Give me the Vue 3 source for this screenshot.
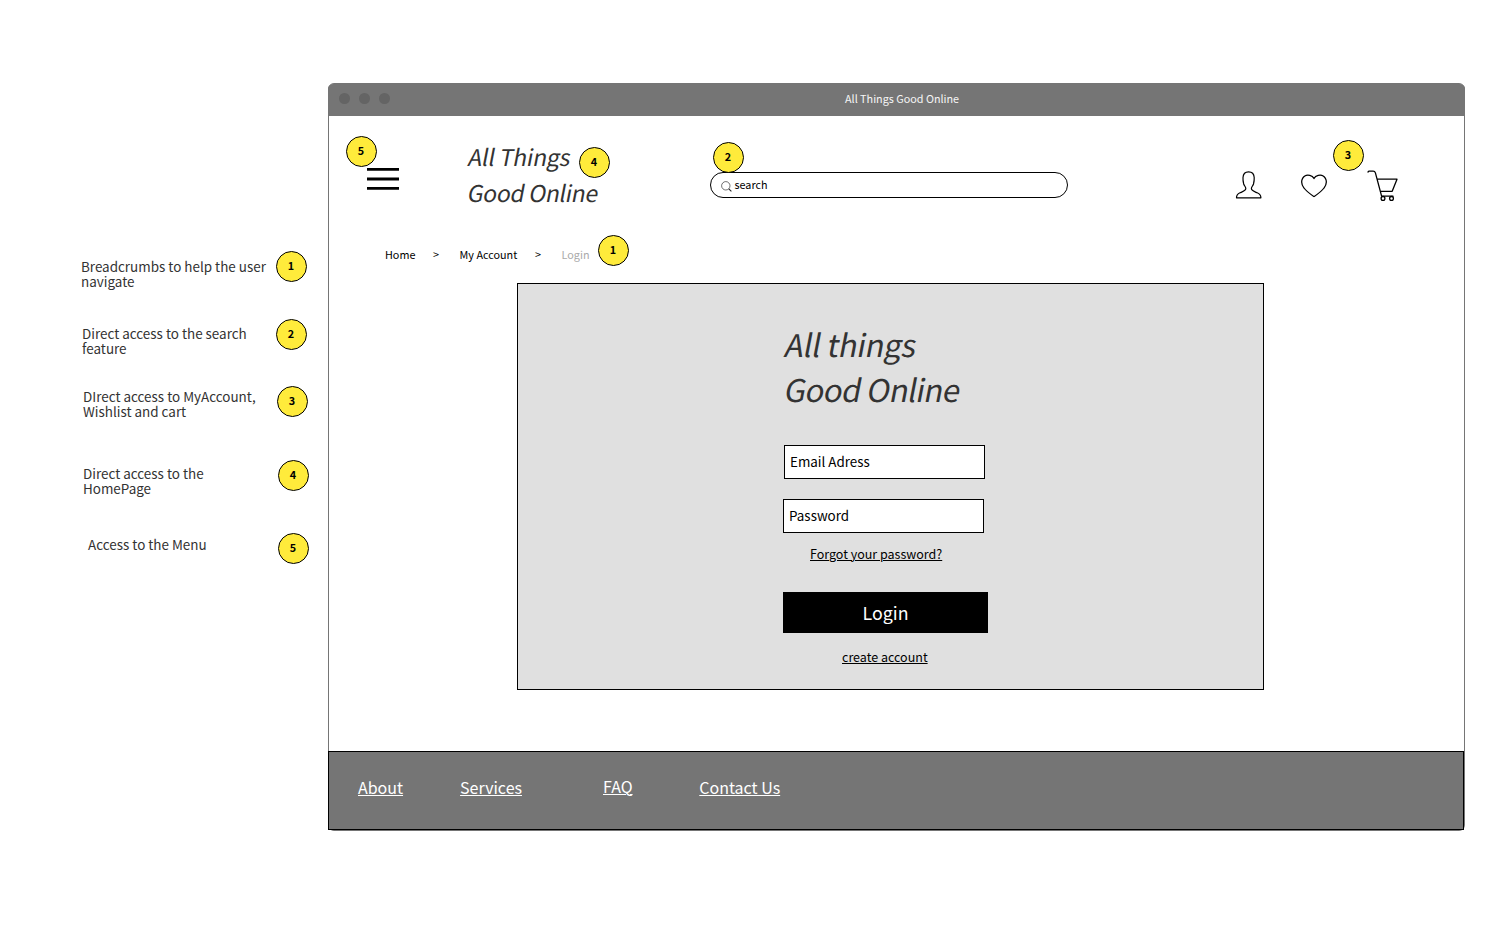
<script setup>
const notes = [
  { n: 1, lines: ['Breadcrumbs to help the user', 'navigate'] },
  { n: 2, lines: ['Direct access to the search', 'feature'] },
  { n: 3, lines: ['DIrect access to MyAccount,', 'Wishlist and cart'] },
  { n: 4, lines: ['Direct access to the', 'HomePage'] },
  { n: 5, lines: ['Access to the Menu'] }
]
const pins = [5, 4, 2, 3, 1]
</script>

<template>
  <div class="board">
    <aside class="legend">
      <div v-for="note in notes" :key="note.n" class="note" :class="'note-' + note.n">
        <p class="note-text"><span v-for="line in note.lines" :key="line">{{ line }}</span></p>
        <span class="badge">{{ note.n }}</span>
      </div>
    </aside>

    <main class="window">
      <div class="titlebar">
        <div class="dots"><i></i><i></i><i></i></div>
        <span class="window-title">All Things Good Online</span>
      </div>

      <header class="header">
        <svg class="menu" width="32" height="24" viewBox="0 0 32 24">
          <path d="M0 2.3H32M0 12H32M0 21.4H32" stroke="#000" stroke-width="2.8" />
        </svg>
        <div class="logo"><span>All Things</span><span>Good Online</span></div>
        <div class="search">
          <svg width="12" height="12" viewBox="0 0 12 12" fill="none" stroke="#222">
            <circle cx="4.8" cy="4.8" r="4.2" stroke-width=".65" />
            <path d="M7.8 7.8L10.4 10.4" stroke-width="1.1" />
          </svg>
          <span>search</span>
        </div>
        <svg class="user" width="28" height="30" viewBox="0 0 28 30" fill="none" stroke="#000" stroke-width="1.2" stroke-linejoin="round">
          <path d="M1.5 27.8C1.5 25 2.6 23.8 5 22.8C8 21.6 10.8 20.9 10.8 18.6C10.8 16.8 9.2 15.8 8.7 14C8.2 12 7.8 10 8 7.5C8.2 3.5 10 1.8 13.6 1.8C17.2 1.8 19 3.5 19.2 7.5C19.4 10 19 12 18.5 14C18 15.8 16.4 16.8 16.4 18.6C16.4 20.9 19.2 21.6 22.2 22.8C24.6 23.8 25.9 25 25.9 27.8Z" />
        </svg>
        <svg class="heart" width="28" height="26" viewBox="0 0 28 26" fill="none" stroke="#000" stroke-width="1.25" stroke-linejoin="round">
          <path d="M14 23.6C10.5 21.2 6.5 18.5 4 15C1.6 11.8 1.2 8 2.6 5.4C4.2 2.4 7.2 1.7 9.8 2.3C11.9 2.8 13.3 4 14 5.6C14.7 4 16.1 2.8 18.2 2.3C20.8 1.7 23.8 2.4 25.4 5.4C26.8 8 26.4 11.8 24 15C21.5 18.5 17.5 21.2 14 23.6Z" />
        </svg>
        <svg class="cart" width="32" height="32" viewBox="0 0 32 32" fill="none" stroke="#000" stroke-width="1.3" stroke-linejoin="round" stroke-linecap="round">
          <path d="M1 2L1.8 1.1H6.1Q7.9 1.1 8.4 2.9L14.6 26.2H26M10.2 9.2H30L25.2 21.3H13.3" />
          <circle cx="16" cy="28.4" r="1.9" /><circle cx="24.5" cy="28.4" r="1.9" />
        </svg>
      </header>

      <nav class="crumbs">
        <span class="c-home">Home</span><span class="c-sep">&gt;</span>
        <span class="c-account">My Account</span><span class="c-sep">&gt;</span>
        <span class="c-login">Login</span>
      </nav>

      <section class="card">
        <div class="card-logo"><span>All things</span><span>Good Online</span></div>
        <div class="field email">Email Adress</div>
        <div class="field password">Password</div>
        <a class="link forgot">Forgot your password?</a>
        <div class="login">Login</div>
        <a class="link create">create account</a>
      </section>

      <footer class="footer">
        <a class="f-about">About</a><a class="f-services">Services</a><a class="f-faq">FAQ</a><a class="f-contact">Contact Us</a>
      </footer>
    </main>

    <span v-for="n in pins" :key="n" class="badge pin" :class="'pin-' + n">{{ n }}</span>
  </div>
</template>

<style>
body { background: #fff; overflow: hidden; }
</style>

<style scoped>
* { box-sizing: border-box; }
.board {
  position: relative; display: flex; width: 1489px; height: 936px;
  font-family: "Noto Sans CJK SC", "Noto Sans", sans-serif; color: #000; white-space: nowrap;
}
.legend { width: 328px; padding-top: 251px; flex: none; }
.note { display: flex; align-items: flex-start; height: 31px; }
.note-text {
  display: flex; flex-direction: column; margin: 8px 0 0 81px; width: 195px; flex: none;
  font-size: 13.45px; line-height: 15px; color: #333;
}
.note-2 { margin-top: 37px; }
.note-2 .note-text { margin: 7px 0 0 82px; width: 194px; }
.note-3 { margin-top: 36px; }
.note-3 .note-text { margin: 3px 0 0 83px; width: 194px; }
.note-4 { margin-top: 43px; }
.note-4 .note-text { margin: 6px 0 0 83px; width: 195px; }
.note-5 { margin-top: 42px; }
.note-5 .note-text { margin: 4px 0 0 88px; width: 190px; }

.badge {
  width: 31px; height: 31px; flex: none; border: 1px solid #000; border-radius: 50%;
  background: #ffeb3b; font-size: 10.8px; font-weight: 700; line-height: 27px; text-align: center; padding-right: 1px;
}
.pin { position: absolute; }
.pin-5 { left: 346px; top: 136px; }
.pin-4 { left: 579px; top: 147px; }
.pin-2 { left: 713px; top: 142px; }
.pin-3 { left: 1333px; top: 140px; }
.pin-1 { left: 598px; top: 235px; }

.window {
  display: flex; flex-direction: column; width: 1137px; height: 748px; margin-top: 83px;
  border: 1px solid #757575; border-radius: 6px;
}
.titlebar {
  display: flex; height: 32px; margin: 0 -1px; padding: 0 1px; background: #757575; border-radius: 5px 5px 0 0;
}
.dots { display: flex; gap: 10px; padding: 9px 0 0 10px; width: 516px; }
.dots i { width: 10.6px; height: 10.6px; margin-right: -.6px; border-radius: 50%; background: #646464; }
.window-title { font-size: 10.8px; line-height: 28px; color: #f5f5f5; }

.header { display: flex; height: 119px; align-items: flex-start; }
.menu { margin: 51px 0 0 38px; flex: none; }
.logo {
  display: flex; flex-direction: column; width: 241px; margin: 22px 0 0 70px; flex: none;
  font-size: 23px; line-height: 36px; color: #333; transform: skewX(-11deg);
  transform-origin: 0 50%; letter-spacing: -.35px;
}
.logo span:first-child { margin-left: -3.5px; letter-spacing: -.2px; }
.logo span:last-child { margin-left: 3px; }
.search {
  display: flex; width: 358px; height: 26px; margin-top: 56px; flex: none;
  border: 1px solid #000; border-radius: 13px; padding-left: 10px; font-size: 10.8px; line-height: 23px;
}
.search svg { margin: 8px 1.5px 0 0; }
.user { margin: 54px 0 0 167px; flex: none; }
.heart { margin: 57px 0 0 37px; flex: none; }
.cart { margin: 54px 0 0 39px; flex: none; }

.crumbs { display: flex; height: 32px; padding: 10px 0 0 56px; font-size: 10.8px; line-height: 19px; }
.c-home { width: 48px; }
.c-sep { width: 26.6px; }
.c-account { width: 75.4px; }
.c-login { color: #aaa; }

.card {
  display: flex; flex-direction: column; align-items: flex-start; width: 747px; height: 407px;
  margin: 16px 0 0 188px; border: 1px solid #000; background: #e0e0e0; flex: none;
}
.card-logo {
  display: flex; flex-direction: column; margin: 37px 0 2px 267px; height: 90px;
  font-size: 31.2px; line-height: 45px; color: #333; transform: skewX(-11deg);
  transform-origin: 0 50%; letter-spacing: -.6px;
}
.card-logo span:first-child { margin-left: -3.5px; letter-spacing: -.3px; }
.card-logo span:last-child { margin-left: 5px; }
.field { width: 201px; height: 34px; border: 1px solid #000; background: #fff; padding-left: 5px; font-size: 13.4px; line-height: 31px; }
.email { margin: 32px 0 0 266px; }
.password { margin: 20px 0 0 265px; }
.link { font-size: 12.5px; line-height: 20px; text-decoration: underline; text-underline-offset: 1px; text-decoration-thickness: 1px; }
.forgot { margin: 11px 0 0 292px; }
.login { width: 205px; height: 41px; margin: 28px 0 0 265px; background: #000; color: #fff; font-size: 17.8px; line-height: 40px; text-align: center; }
.create { margin: 14px 0 0 324px; }

.footer {
  display: flex; width: 1136px; height: 79px; margin: 61px 0 0 -1px; padding: 23px 0 0 29px;
  border: 1px solid #000; background: #757575; color: #fff; font-size: 16px; line-height: 24px; flex: none;
}
.footer a { height: 24px; text-decoration: underline; text-underline-offset: 1px; text-decoration-thickness: 1px; }
.f-services { margin-left: 57px; }
.footer .f-faq { margin: -1px 0 0 81px; }
.f-contact { margin-left: 66.7px; }
</style>
